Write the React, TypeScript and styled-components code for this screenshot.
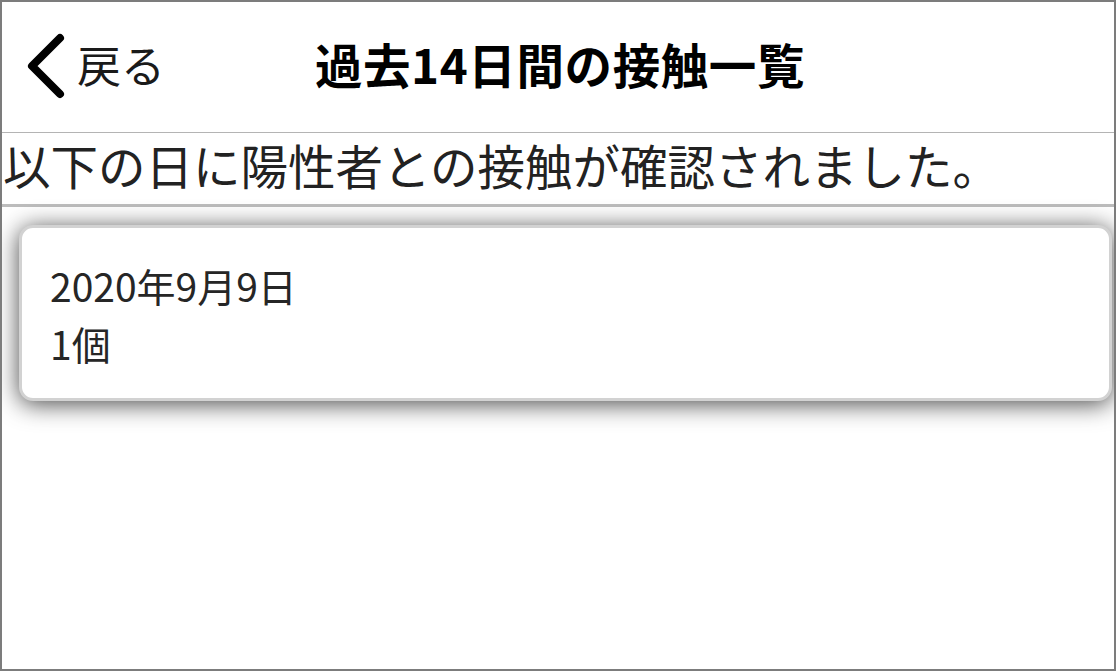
import React from "react";
import styled, { createGlobalStyle } from "styled-components";

const Global = createGlobalStyle`
  html, body { margin: 0; padding: 0; background: #ffffff; }
  body { font-family: "Noto Sans CJK JP", "Noto Sans", sans-serif; color: #1f1f1f; }
  * { box-sizing: border-box; }
`;

const Frame = styled.div`
  width: 1116px;
  height: 671px;
  border: 2px solid #7c7c7c;
  display: flex;
  flex-direction: column;
  overflow: hidden;
  background: #ffffff;
`;

const Header = styled.header`
  position: relative;
  height: 131px;
  flex: none;
  display: flex;
  align-items: center;
  justify-content: center;
  padding-bottom: 8px;
  border-bottom: 1px solid #b4b4b4;
`;

const BackButton = styled.button`
  position: absolute;
  left: 22px;
  top: 31px;
  display: flex;
  align-items: center;
  gap: 11px;
  background: none;
  border: none;
  padding: 0;
  font-family: inherit;
  font-size: 44px;
  line-height: 64px;
  color: #1a1a1a;
  cursor: pointer;
`;

const BackLabel = styled.span`
  margin-top: -4px;
`;

const Title = styled.h1`
  margin: 0 0 0 4px;
  font-size: 47.5px;
  font-weight: 700;
  color: #000000;
  letter-spacing: 0.6px;
`;

const Notice = styled.div`
  height: 74px;
  flex: none;
  display: flex;
  align-items: center;
  padding: 0 0 8px 1px;
  font-size: 47.5px;
  color: #222222;
  border-bottom: 3px solid #bdbdbd;
  white-space: nowrap;
`;

const List = styled.div`
  flex: 1;
  padding: 18px 2px 0 17px;
  display: flex;
  flex-direction: column;
  gap: 16px;
`;

const Card = styled.div`
  height: 176px;
  background: #ffffff;
  border: 3px solid #d2d2d2;
  border-radius: 14px;
  box-shadow: 0 3px 24px rgba(0, 0, 0, 0.72);
  padding: 28px 28px 0;
  display: flex;
  flex-direction: column;
`;

const CardLine = styled.div`
  font-size: 39px;
  line-height: 58px;
  color: #262626;
`;

const Chevron = () => (
  <svg width="42" height="66" viewBox="0 0 42 66" fill="none">
    <path d="M36 5 L8 33 L36 61" stroke="#000" strokeWidth="8" strokeLinecap="round" strokeLinejoin="round" />
  </svg>
);

export default function App() {
  const items = [{ date: "2020年9月9日", count: "1個" }];
  return (
    <>
      <Global />
      <Frame>
        <Header>
          <BackButton>
            <Chevron />
            <BackLabel>戻る</BackLabel>
          </BackButton>
          <Title>過去14日間の接触一覧</Title>
        </Header>
        <Notice>以下の日に陽性者との接触が確認されました。</Notice>
        <List>
          {items.map((it) => (
            <Card key={it.date}>
              <CardLine>{it.date}</CardLine>
              <CardLine>{it.count}</CardLine>
            </Card>
          ))}
        </List>
      </Frame>
    </>
  );
}
